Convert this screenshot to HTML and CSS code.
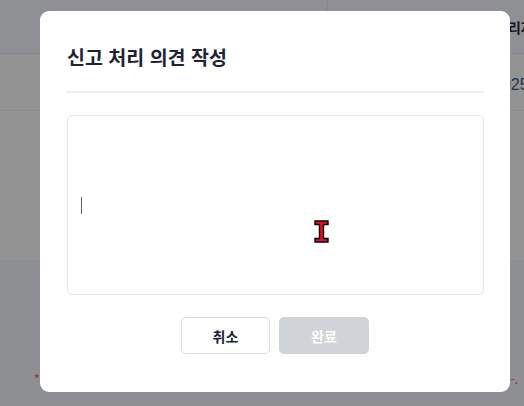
FILE: index.html
```html
<!DOCTYPE html>
<html lang="ko">
<head>
<meta charset="utf-8">
<title>신고 처리 의견 작성</title>
<link rel="stylesheet" href="styles.css">
</head>
<body>
<div class="page">
  <div class="thead">
    <div class="th th-left"></div>
    <div class="th th-right"><span class="th-text">처리자</span></div>
  </div>
  <div class="row row-1"><span class="cell-text">2025</span></div>
  <div class="row row-2"></div>
  <div class="footer">
    <span class="note-left">* 신고 처리 시 의견을 작성해 주세요.</span>
    <span class="note-right">-.</span>
  </div>
</div>

<div class="modal" role="dialog" aria-labelledby="modal-title">
  <div class="modal-head">
    <h2 class="modal-title" id="modal-title">신고 처리 의견 작성</h2>
  </div>
  <div class="editor"><span class="caret"></span></div>
  <div class="actions">
    <button class="btn btn-cancel">취소</button>
    <button class="btn btn-done" disabled>완료</button>
  </div>
  <svg class="ibeam" width="15" height="23" viewBox="0 0 15 23" aria-hidden="true">
    <path d="M1 1 H14 V4.5 H9.5 V18.5 H14 V22 H1 V18.5 H5.5 V4.5 H1 Z" fill="#e8102c" stroke="#000" stroke-width="1.4" stroke-linejoin="miter"/>
  </svg>
</div>
</body>
</html>
```
FILE: styles.css
```css
* { box-sizing: border-box; }
html, body { margin: 0; padding: 0; }
body {
  width: 524px;
  height: 406px;
  overflow: hidden;
  font-family: "Noto Sans CJK KR", "Noto Sans", sans-serif;
  background: #8e8f93;
}
.page {
  width: 524px;
  height: 406px;
  display: flex;
  flex-direction: column;
}
.thead {
  height: 54px;
  display: flex;
  background: #8f9094;
  border-bottom: 1px solid #86878a;
}
.th-left {
  width: 328px;
  border-right: 1px solid #87888c;
}
.th-right {
  flex: 1;
  padding: 14px 0 0 167px;
  white-space: nowrap;
  overflow: hidden;
}
.th-text {
  font-size: 14px;
  font-weight: 700;
  color: #14171f;
}
.row {
  background: #939393;
}
.row-1 {
  height: 57px;
  border-bottom: 1px solid #8a8a8a;
  padding: 17px 0 0 493px;
  white-space: nowrap;
  overflow: hidden;
}
.cell-text {
  font-family: "Liberation Sans", "Noto Sans", sans-serif;
  font-size: 16px;
  color: #243449;
}
.row-2 {
  height: 149px;
}
.footer {
  flex: 1;
  background: #8e8f93;
  display: flex;
  justify-content: space-between;
  padding: 110px 0 0 34px;
  white-space: nowrap;
}
.note-left, .note-right {
  font-size: 12px;
  color: #a3262b;
}
.note-right {
  margin-right: 6px;
}

.modal {
  position: fixed;
  left: 40px;
  top: 11px;
  width: 470px;
  height: 381px;
  background: #fff;
  border-radius: 9px;
  padding: 32px 26px 0 27px;
  display: flex;
  flex-direction: column;
}
.modal-head {
  border-bottom: 2px solid #eeeeee;
  padding-bottom: 21px;
}
.modal-title {
  margin: 0;
  font-size: 19.5px;
  line-height: 27px;
  font-weight: 700;
  color: #1e2336;
}
.editor {
  margin-top: 22px;
  height: 180px;
  border: 1px solid #e6e6e6;
  border-radius: 5px;
  display: flex;
  align-items: center;
  padding-left: 13px;
}
.caret {
  width: 1px;
  height: 17px;
  background: #596072;
}
.actions {
  margin-top: 22px;
  display: flex;
  justify-content: center;
  gap: 9px;
  padding-right: 1px;
}
.btn {
  width: 89px;
  height: 37px;
  border-radius: 5px;
  font-family: "Noto Sans CJK KR", "Noto Sans", sans-serif;
  font-size: 14px;
  font-weight: 700;
  padding: 0;
}
.btn-cancel {
  background: #fff;
  border: 1px solid #dcdde0;
  color: #1e2336;
}
.btn-done {
  width: 90px;
  background: #d0d3d8;
  border: 1px solid #d0d3d8;
  color: #fff;
}
.ibeam {
  position: absolute;
  left: 274px;
  top: 209px;
}
```
